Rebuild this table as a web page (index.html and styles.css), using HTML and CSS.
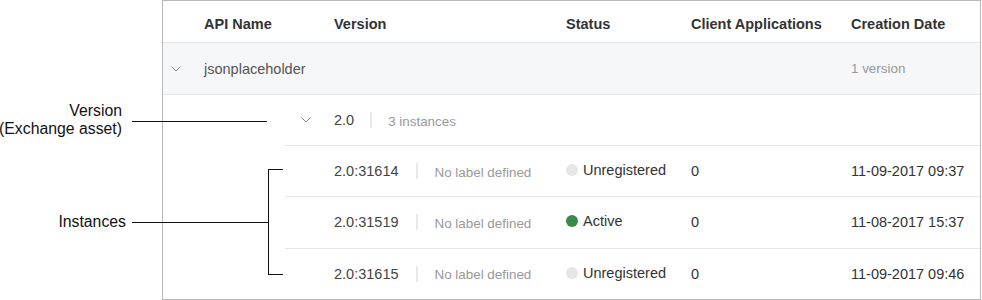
FILE: index.html
```html
<!DOCTYPE html>
<html lang="en">
<head>
    <meta charset="UTF-8">
    <title>API instances</title>
    <link rel="stylesheet" href="styles.css">
</head>
<body>
<div class="page">
    <div class="table">
        <div class="row head">
            <span></span>
            <span>API Name</span>
            <span>Version</span>
            <span>Status</span>
            <span>Client Applications</span>
            <span>Creation Date</span>
        </div>

        <div class="row group">
            <span class="toggle">
                <svg width="10" height="6" viewBox="0 0 10 6"><polyline points="0.5,0.5 5,5 9.5,0.5"/></svg>
            </span>
            <span class="api-name">jsonplaceholder</span>
            <span></span>
            <span></span>
            <span></span>
            <span class="muted">1 version</span>
        </div>

        <div class="nested">
            <div class="row version">
                <span class="toggle">
                    <svg width="10" height="6" viewBox="0 0 10 6"><polyline points="0.5,0.5 5,5 9.5,0.5"/></svg>
                </span>
                <span class="pair">
                    <span class="id">2.0</span>
                    <span class="sep"></span>
                    <span class="muted">3 instances</span>
                </span>
            </div>

            <div class="row instance">
                <span></span>
                <span class="pair">
                    <span class="id">2.0:31614</span>
                    <span class="sep"></span>
                    <span class="muted">No label defined</span>
                </span>
                <span class="status"><i class="dot"></i>Unregistered</span>
                <span>0</span>
                <span>11-09-2017 09:37</span>
            </div>

            <div class="row instance">
                <span></span>
                <span class="pair">
                    <span class="id">2.0:31519</span>
                    <span class="sep"></span>
                    <span class="muted">No label defined</span>
                </span>
                <span class="status"><i class="dot active"></i>Active</span>
                <span>0</span>
                <span>11-08-2017 15:37</span>
            </div>

            <div class="row instance">
                <span></span>
                <span class="pair">
                    <span class="id">2.0:31615</span>
                    <span class="sep"></span>
                    <span class="muted">No label defined</span>
                </span>
                <span class="status"><i class="dot"></i>Unregistered</span>
                <span>0</span>
                <span>11-09-2017 09:46</span>
            </div>
        </div>
    </div>

    <!-- callouts drawn over the table -->
    <div class="label label-version">Version<br>(Exchange asset)</div>
    <div class="leader leader-version"></div>
    <div class="label label-instances">Instances</div>
    <div class="leader leader-instances"></div>
    <div class="bracket"></div>
</div>
</body>
</html>
```

FILE: styles.css
```css
* {
    margin: 0;
    padding: 0;
    box-sizing: border-box;
}

body {
    font-family: "Liberation Sans", Arial, sans-serif;
    font-size: 14.5px;
    color: #333;
    background: #fff;
}

.page {
    position: relative;
    width: 982px;
    height: 300px;
}

.table {
    margin-left: 162px;
    width: 819px;
    height: 300px;
    border: 1px solid #b9b9b9;
    display: flex;
    flex-direction: column;
}

.row {
    display: grid;
    grid-template-columns: 41px 130px 232px 125px 160px 1fr;
    align-items: center;
    border-bottom: 1px solid #e6e7e9;
}

.head {
    height: 42px;
    padding-top: 5px;
    font-weight: bold;
    color: #333;
}

.group {
    height: 52px;
    background: #f6f7f9;
}

.api-name {
    color: #555;
}

.toggle {
    display: flex;
    align-items: center;
    padding-left: 8px;
}

.toggle svg {
    fill: none;
    stroke: #8a8a8a;
    stroke-width: 1;
}

.muted {
    font-size: 13.4px;
    color: #999;
}

.nested {
    flex: 1;
    margin-left: 122px;
    display: flex;
    flex-direction: column;
}

.nested .row {
    grid-template-columns: 49px 232px 125px 160px 1fr;
}

.version {
    height: 51px;
}

.version .toggle {
    padding-left: 16px;
}

.instance {
    flex: 1;
}

.instance:last-child {
    border-bottom: none;
}

.pair {
    display: flex;
    align-items: center;
    gap: 16px;
}

.instance .pair {
    gap: 17px;
}

.pair .muted {
    padding-top: 2px;
}

.id {
    color: #444;
}

.sep {
    width: 2px;
    height: 16px;
    background: #e8e8ea;
}

.status {
    display: flex;
    align-items: center;
    gap: 5px;
    padding-bottom: 2px;
}

.dot {
    width: 12px;
    height: 12px;
    border-radius: 50%;
    background: #e6e6e8;
}

.dot.active {
    background: #3a8a4b;
}

.label {
    position: absolute;
    line-height: 18px;
    font-size: 15.8px;
    color: #111;
    text-align: right;
    white-space: nowrap;
}

.label-version {
    top: 102px;
    right: 860px;
}

.label-instances {
    top: 213px;
    right: 856px;
}

.leader {
    position: absolute;
    left: 132px;
    height: 1px;
    background: #111;
}

.leader-version {
    top: 121px;
    width: 135px;
}

.leader-instances {
    top: 222px;
    width: 136px;
}

.bracket {
    position: absolute;
    left: 268px;
    top: 169px;
    width: 15px;
    height: 106px;
    border: 1px solid #111;
    border-right: none;
}
```
